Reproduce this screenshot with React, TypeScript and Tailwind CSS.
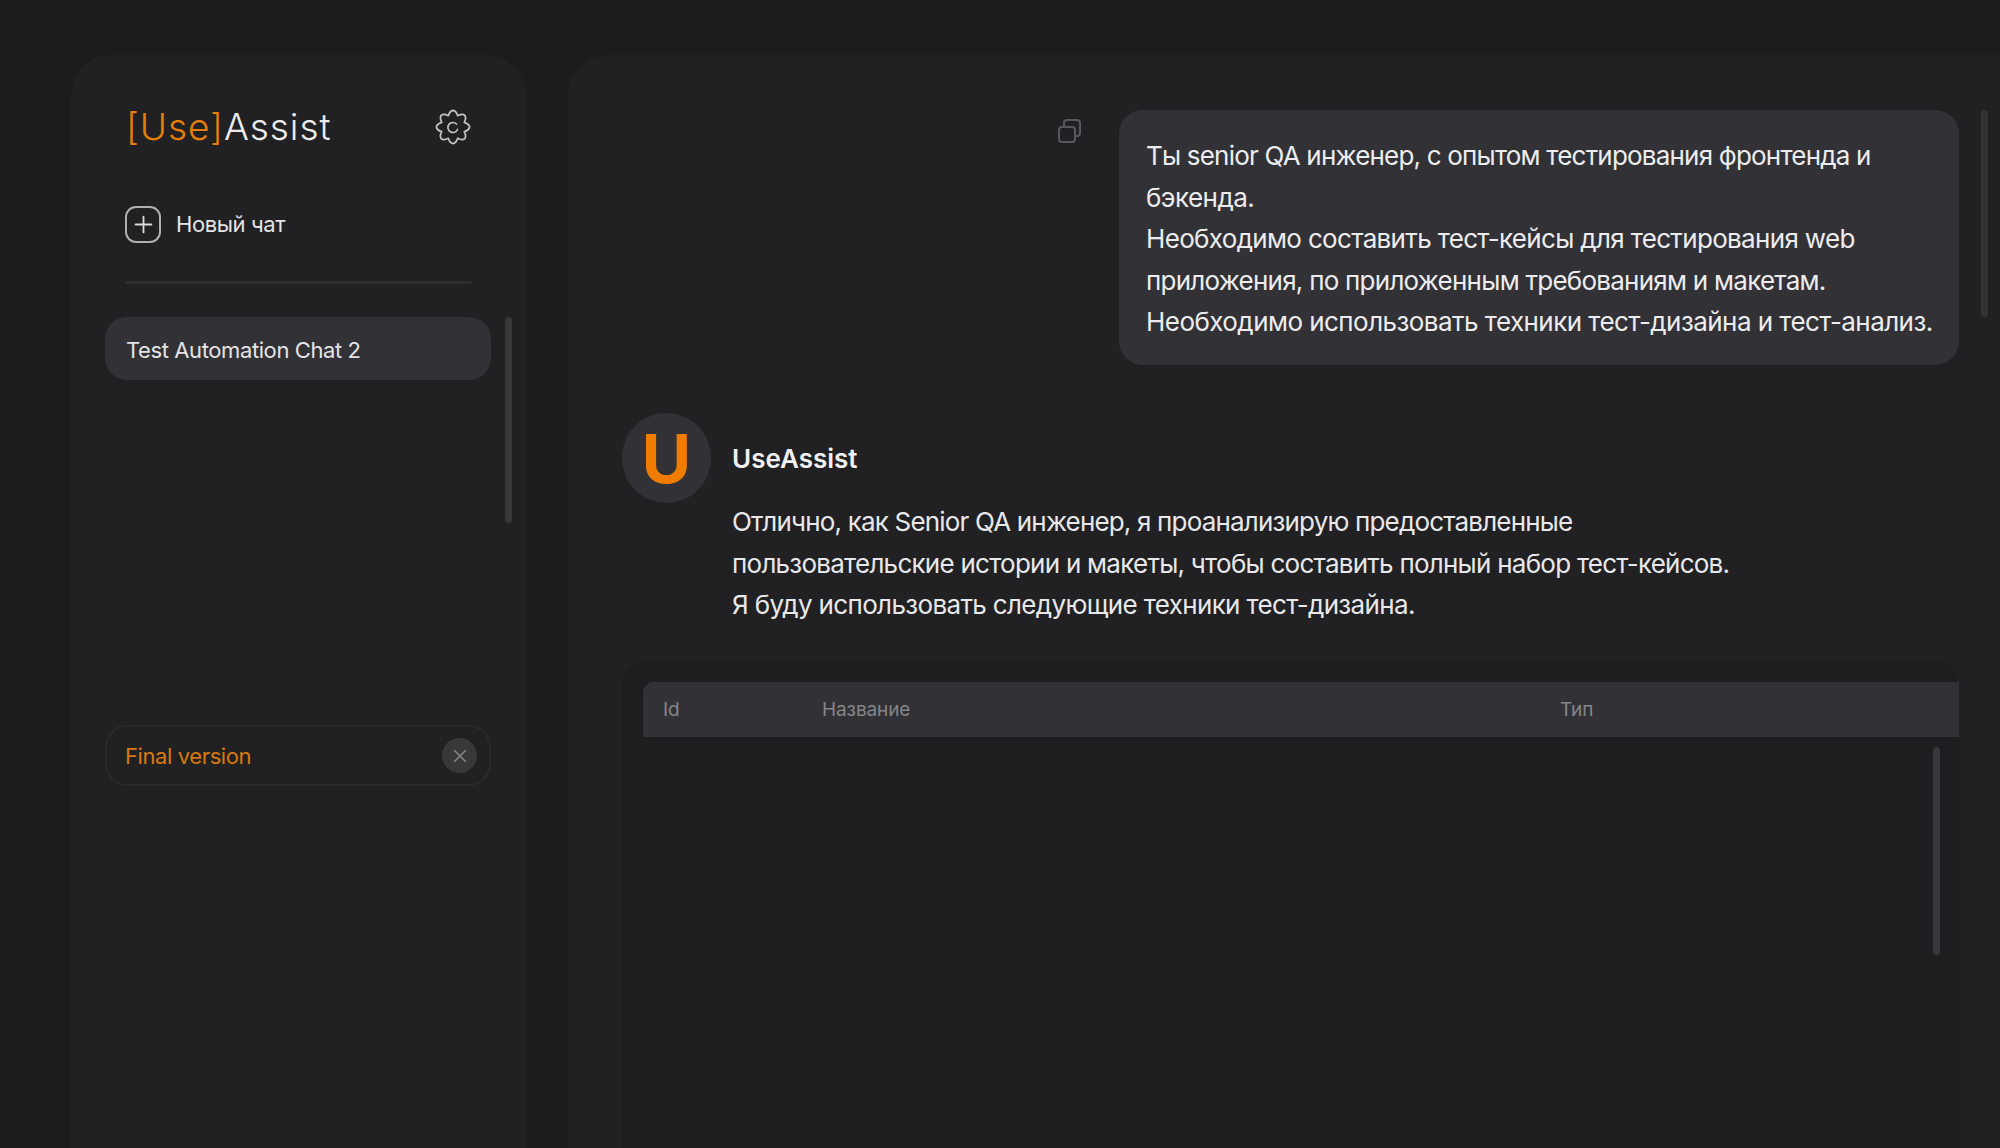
import { Plus, X } from "lucide-react";

const font = { fontFamily: "Inter, 'Noto Sans', sans-serif" };

// 8 lobes around the centre of a 36 box
const gearPath = () => {
  const pt = (r: number, a: number) => `${(18 + r * Math.cos(a)).toFixed(2)} ${(18 + r * Math.sin(a)).toFixed(2)}`;
  const step = Math.PI / 8;
  let d = `M${pt(12.2, -step)}`;
  for (let i = 0; i < 8; i++) {
    const a = i * 2 * step;
    d += `Q${pt(16.4, a - step * 0.5)} ${pt(16.6, a)}Q${pt(16.4, a + step * 0.5)} ${pt(12.2, a + step)}`;
  }
  return d + "Z";
};

const GearIcon = () => (
  <svg width="36" height="36" viewBox="0 0 36 36" fill="none" stroke="#c4c4c7" strokeWidth="1.7">
    <path d={gearPath()} strokeLinejoin="round" />
    <path d="M21.5 15A5 5 0 1 0 22.5 20.5" strokeLinecap="round" />
  </svg>
);

const CopyIcon = () => (
  <svg width="24" height="24" viewBox="0 0 24 24" fill="none" stroke="#58585c" strokeWidth="2">
    <rect x="1" y="8" width="16" height="15" rx="3" />
    <path d="M6 8V4a3 3 0 0 1 3-3h10a3 3 0 0 1 3 3v10a3 3 0 0 1-3 3h-2" />
  </svg>
);

const Sidebar = () => (
  <aside className="w-[455px] shrink-0 rounded-t-[40px] bg-[#212123] pl-[34px] pr-[14px] pt-[48px]">
    <div className="flex items-center justify-between pl-[21px] pr-[41px]">
      <div className="text-[37px] leading-[48px] font-light tracking-[0.95px] text-[#ececec]">
        <span className="text-[#e67e0a]">[Use]</span>Assist
      </div>
      <GearIcon />
    </div>

    <div className="mt-[54px] flex items-center gap-[15px] pl-[20px]">
      <div className="flex h-[37px] w-[36px] items-center justify-center rounded-[11px] border-2 border-[#b0b0b3]">
        <Plus size={27} strokeWidth={1.6} className="text-[#dcdcdc]" />
      </div>
      <span className="text-[22px] leading-[38px] tracking-[-0.4px] text-[#e4e4e6]">Новый чат</span>
    </div>

    <div className="ml-[20px] mr-[40px] mt-[38px] h-[3px] rounded-full bg-[#2e2e31]" />

    <div className="mt-[33px] flex gap-[14px]">
      <div className="flex h-[63px] w-[386px] shrink-0 items-center rounded-[22px] bg-[#323236] pl-[21px] pt-[3px] text-[22px] tracking-[-0.4px] text-[#e4e4e6]">
        Test Automation Chat 2
      </div>
      <div className="h-[206px] w-[7px] rounded-full bg-[#38383b]" />
    </div>

    <div className="mt-[202px] flex h-[61px] w-[386px] items-center justify-between rounded-[22px] border-2 border-[#2a2a2d] pl-[18px] pr-[12px]">
      <span className="pt-[2px] text-[22px] tracking-[-0.4px] text-[#d9780f]">Final version</span>
      <div className="flex h-[35px] w-[35px] items-center justify-center rounded-full bg-[#38383b]">
        <X size={22} strokeWidth={1.9} className="text-[#828286]" />
      </div>
    </div>
  </aside>
);

const Main = () => (
  <main className="relative flex-1 rounded-tl-[40px] bg-[#212123] pl-[54px] pr-[41px] pt-[55px]">
    <div className="absolute right-[12px] top-[55px] h-[207px] w-[7px] rounded-full bg-[#333336]" />

    <div className="flex justify-end gap-[37px]">
      <div className="mt-[9px]">
        <CopyIcon />
      </div>
      <div className="h-[255px] w-[840px] rounded-[24px] bg-[#323236] pl-[27px] pt-[25px] text-[26px] leading-[41.5px] text-[#ececee]">
        <span className="block tracking-[-0.8px]">Ты senior QA инженер, с опытом тестирования фронтенда и</span>
        <span className="block tracking-[-0.55px]">бэкенда.</span>
        <span className="block tracking-[-0.67px]">Необходимо составить тест-кейсы для тестирования web</span>
        <span className="block tracking-[-0.75px]">приложения, по приложенным требованиям и макетам.</span>
        <span className="block tracking-[-0.55px]">Необходимо использовать техники тест-дизайна и тест-анализ.</span>
      </div>
    </div>

    <div className="mt-[48px] flex gap-[21px]">
      <div className="flex h-[90px] w-[89px] shrink-0 items-center justify-center rounded-full bg-[#323236] text-[68px] font-bold leading-none text-[#f07d00]">
        U
      </div>
      <div>
        <div className="mt-[25px] text-[26px] font-semibold leading-[42px] tracking-[0px] text-[#f0f0f2]">UseAssist</div>
        <div className="mt-[21px] text-[26px] leading-[41.5px] text-[#e8e8ea]">
          <span className="block tracking-[-0.82px]">Отлично, как Senior QA инженер, я проанализирую предоставленные</span>
          <span className="block tracking-[-0.75px]">пользовательские истории и макеты, чтобы составить полный набор тест-кейсов.</span>
          <span className="block tracking-[-0.65px]">Я буду использовать следующие техники тест-дизайна.</span>
        </div>
      </div>
    </div>

    <div className="relative mt-[35px] h-[487px] rounded-t-[24px] bg-[#1e1e20] pl-[21px] pt-[21px]">
      <div className="flex h-[55px] items-center rounded-tl-[10px] bg-[#323236] pt-[2px] text-[19px] tracking-[-0.1px] text-[#85858a]">
        <div className="w-[179px] pl-[20px]">Id</div>
        <div className="w-[738px]">Название</div>
        <div>Тип</div>
      </div>
      <div className="absolute right-[19px] top-[86px] h-[208px] w-[7px] rounded-full bg-[#38383c]" />
    </div>
  </main>
);

export default function App() {
  return (
    <div style={font} className="flex h-[1148px] w-[2000px] gap-[42px] overflow-hidden bg-[#1c1c1e] pl-[71px] pt-[55px]">
      <Sidebar />
      <Main />
    </div>
  );
}
